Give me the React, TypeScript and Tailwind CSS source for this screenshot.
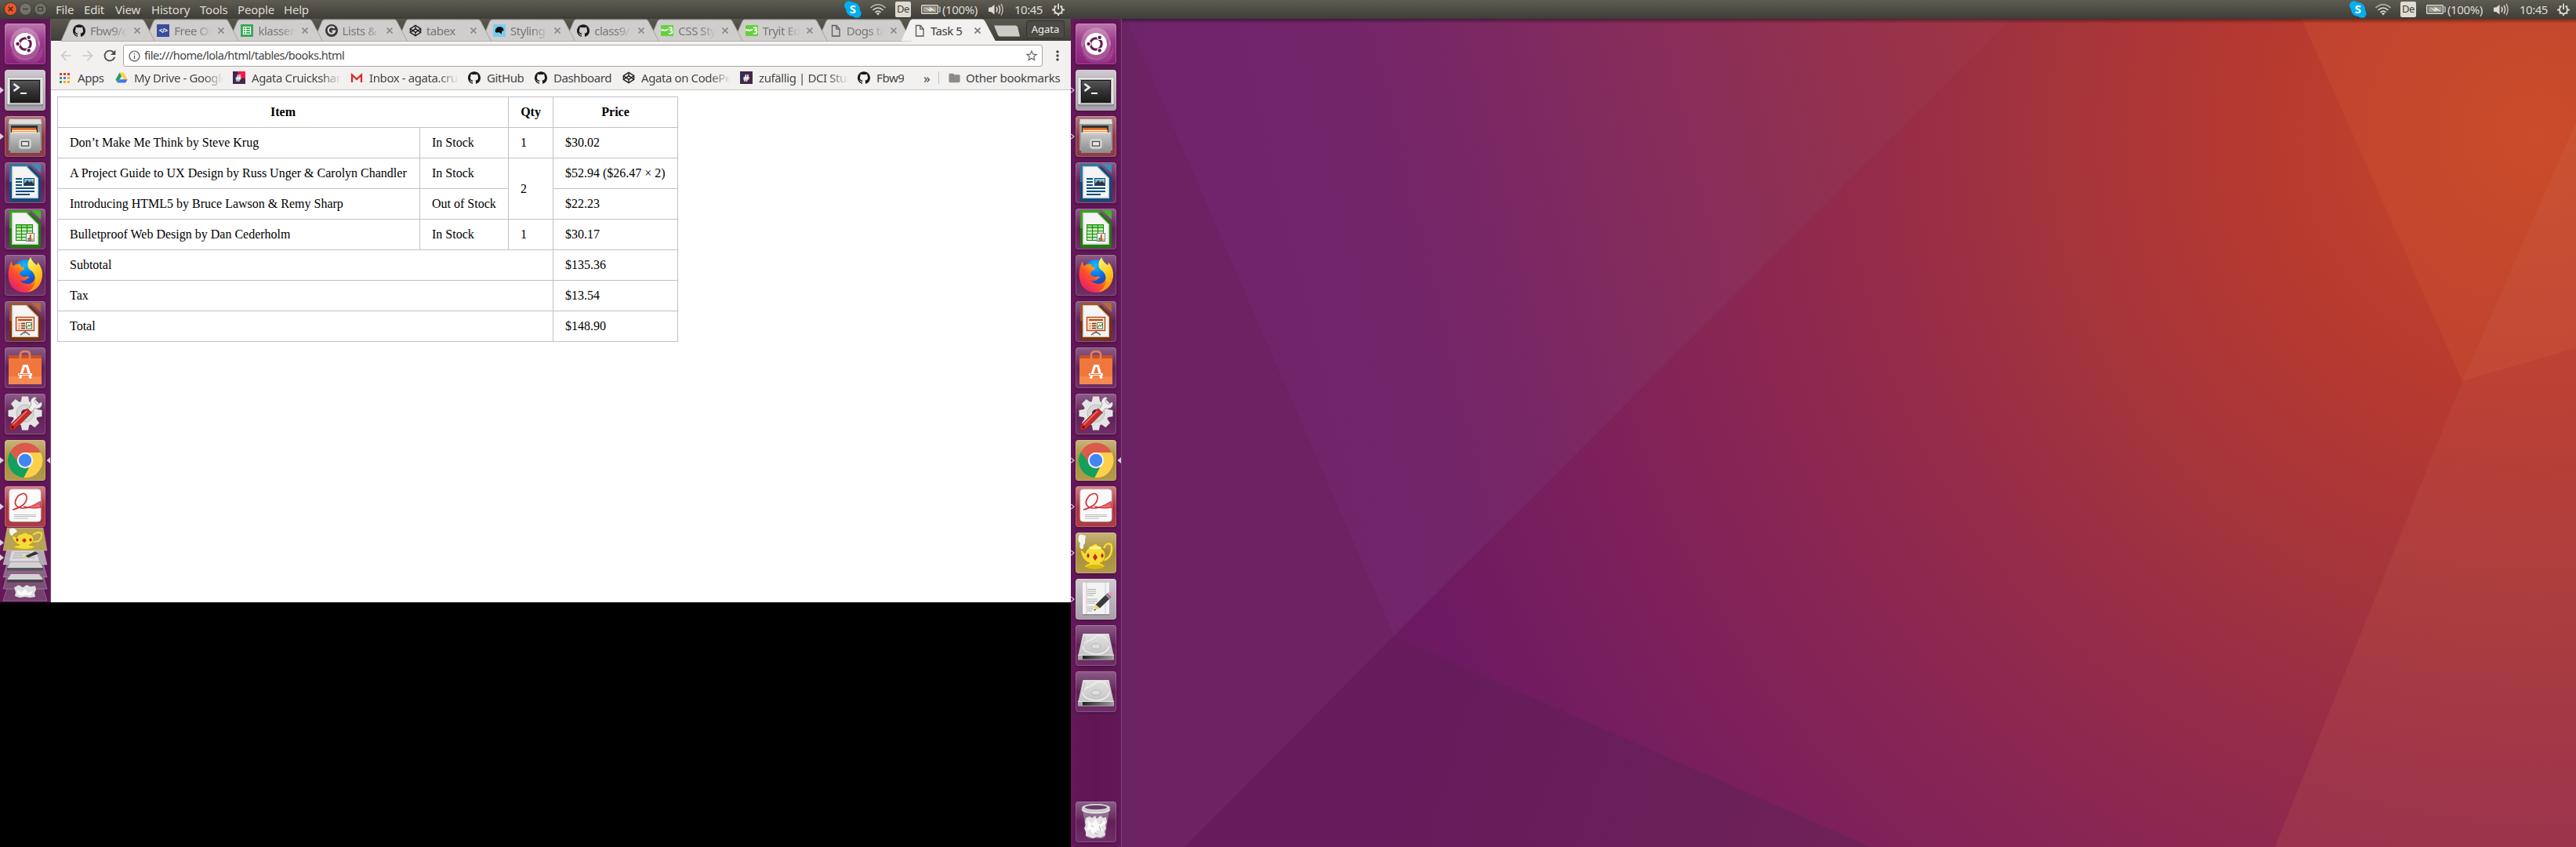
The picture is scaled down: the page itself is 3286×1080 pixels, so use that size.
import React from "react";
import { SiGithub } from "react-icons/si";
import { FiCodepen } from "react-icons/fi";
import {
  MdArrowBack,
  MdArrowForward,
  MdRefresh,
  MdStarBorder,
  MdMoreVert,
  MdInfoOutline,
  MdFolder,
} from "react-icons/md";

/* ---------- top panel ---------- */

function Indicators() {
  return (
    <div className="flex h-6 w-[290px] items-center text-[15px] text-[#dfdbd2]">
      <svg className="h-6 w-[34px]" viewBox="0 0 34 24">
        <circle cx="12" cy="12" r="9" fill="#00aff0" />
        <circle cx="6.8" cy="7" r="5.8" fill="#00aff0" />
        <circle cx="17" cy="17.2" r="5.6" fill="#00aff0" />
        <text x="12" y="17" textAnchor="middle" fontSize="15" fontWeight="700" fill="#fff" fontFamily="Open Sans, sans-serif">S</text>
      </svg>
      <svg className="h-6 w-[32px]" viewBox="0 0 32 24" fill="none" stroke="#dfdbd2" strokeWidth="1.6">
        <path d="M0.5 10Q10 1.500 19.500 10" opacity=".75" />
        <path d="M3.500 13Q10 7 16.500 13" />
        <path d="M6.500 15.800Q10 12.500 13.500 15.800" />
        <path d="M10 19.500L7.800 17Q10 15.300 12.200 17Z" fill="#dfdbd2" stroke="none" />
      </svg>
      <div className="mr-[13px] flex h-5 w-5 items-center justify-center rounded-[2px] bg-[#dfdbd2] text-[13px] tracking-[-0.4px] text-[#3c3b37]">De</div>
      <svg className="h-6 w-[27px]" viewBox="0 0 27 24">
        <rect x=".7" y="6.700" width="20.600" height="10.600" rx="1" fill="none" stroke="#dfdbd2" strokeWidth="1.400" />
        <rect x="2.500" y="8.500" width="17" height="7" fill="#a09d95" />
        <path d="M22.500 9h1.500v6h-1.500" fill="none" stroke="#dfdbd2" strokeWidth="1.200" />
        <path d="M4.500 9.500L11.500 12.200L10.500 8.500L18.500 14.500L12 12.800L12.600 15.300Z" fill="#f0ede6" />
      </svg>
      <span className="w-[59px] text-[15px] tracking-[-0.4px]">(100%)</span>
      <svg className="h-6 w-[33px]" viewBox="0 0 33 24" fill="none" stroke="#dfdbd2" strokeWidth="1.500">
        <path d="M0 9.500h3L7.500 6v12.500L3 15H0z" fill="#dfdbd2" stroke="none" />
        <path d="M10 9q2 3.200 0 6.500M13 7q3.200 5.200 0 10.500" />
        <path d="M16 5q4.200 7.200 0 14.500" opacity=".75" />
      </svg>
      <span className="w-[48px] tracking-[-0.5px]">10:45</span>
      <svg className="h-4 w-4" viewBox="0 0 16 16" fill="none" stroke="#dfdbd2">
        <circle cx="8" cy="8.500" r="5" strokeWidth="1.900" />
        <path d="M3 3.500L4.500 5M13 3.500L11.500 5M0 8.500h3M13 8.500h3M3 13.500l1.500-1.500M13 13.500L11.500 12M8 13.500v2.500" strokeWidth="2" />
        <path d="M8 0v8" stroke="#46453f" strokeWidth="4.500" />
        <path d="M8 .5v7.500" strokeWidth="1.900" />
      </svg>
    </div>
  );
}

const menus = [
  { t: "File", c: "w-9" },
  { t: "Edit", c: "w-10" },
  { t: "View", c: "w-[46px]" },
  { t: "History", c: "w-[62px]" },
  { t: "Tools", c: "w-12" },
  { t: "People", c: "w-[59px]" },
  { t: "Help", c: "w-10" },
];

function Panel({ window: hasWindow }: { window?: boolean }) {
  return (
    <div className="relative z-10 flex h-6 shrink-0 items-center justify-between bg-linear-to-b from-[#5e5c51] to-[#3e3d39]">
      {hasWindow ? (
        <div className="flex h-6 items-center text-[15px] text-[#dfdbd2]">
          <svg className="h-6 w-[71px]" viewBox="0 0 71 24">
            <circle cx="13.500" cy="11.500" r="8" fill="#e9592b" stroke="#3a2a22" strokeWidth=".8" />
            <circle cx="32.500" cy="11.500" r="7.700" fill="#757269" stroke="#37362f" strokeWidth=".8" />
            <circle cx="51.500" cy="11.500" r="7.700" fill="#757269" stroke="#37362f" strokeWidth=".8" />
            <path d="M10.800 8.800l5.400 5.400M16.200 8.800l-5.400 5.400" stroke="#4a2413" strokeWidth="1.500" />
            <path d="M29 11.500h7" stroke="#3a3934" strokeWidth="1.300" />
            <rect x="48.500" y="9.200" width="6" height="4.600" fill="none" stroke="#3a3934" strokeWidth="1.200" />
          </svg>
          {menus.map((m) => (
            <span key={m.t} className={"tracking-[-0.2px] " + m.c}>{m.t}</span>
          ))}
        </div>
      ) : (
        <div />
      )}
      <Indicators />
    </div>
  );
}

/* ---------- launcher icons (52 x 52) ---------- */

function UbuntuIcon() {
  return (
    <g>
      <path d="M8 30A19 19 0 0 1 34 7Q46 14 45 30Q38 14 26 13Z" fill="#fff" opacity=".25" />
      <path d="M44 22A19 19 0 0 1 18 45Q7 38 7 22Q14 38 26 39Z" fill="#fff" opacity=".2" />
      <path d="M26 45Q42 44 48 30Q50 44 40 50H20Q10 46 8 34Q16 44 26 45Z" fill="#fff" opacity=".1" />
      <circle cx="26" cy="26" r="14" fill="#fff" />
      <circle cx="26" cy="26" r="7.200" fill="none" stroke="#5e1a52" strokeWidth="3" />
      <g stroke="#fff" strokeWidth="1.200" fill="#5e1a52">
        <circle cx="16.600" cy="26" r="2.800" />
        <circle cx="30.700" cy="17.700" r="2.800" />
        <circle cx="30.700" cy="34.300" r="2.800" />
      </g>
    </g>
  );
}

function TerminalIcon() {
  return (
    <g>
      <defs>
        <linearGradient id="term" x1="0" y1="0" x2="0" y2="1">
          <stop offset="0" stopColor="#555" />
          <stop offset=".5" stopColor="#333" />
          <stop offset="1" stopColor="#1c1c1c" />
        </linearGradient>
      </defs>
      <rect x="3" y="9.500" width="46" height="37" rx="1.500" fill="#888" />
      <rect x="3.500" y="10" width="45" height="34" rx="1" fill="#f4f4f4" />
      <rect x="5.500" y="11.500" width="41" height="33" fill="#bbb" />
      <rect x="7" y="13" width="38" height="29" fill="#111" />
      <rect x="8" y="14" width="36" height="27" fill="url(#term)" />
      <path d="M11.500 18l6 4.500l-6 4.500" fill="none" stroke="#eee" strokeWidth="2.600" />
      <path d="M20 30h8" stroke="#fff" strokeWidth="2" />
    </g>
  );
}

function FilesIcon() {
  return (
    <g>
      <defs>
        <linearGradient id="cab" x1="0" y1="0" x2="0" y2="1">
          <stop offset="0" stopColor="#cacaca" />
          <stop offset="1" stopColor="#8b8b8b" />
        </linearGradient>
      </defs>
      <path d="M6 4h40l1 6v34H5V10z" fill="#9a9a9a" />
      <path d="M6 4h40l1 6H5z" fill="#dedede" />
      <rect x="8" y="12" width="34" height="10" fill="#333" />
      <rect x="9" y="15" width="31" height="8" fill="#d9672d" />
      <path d="M9 17.500h32V24H9z" fill="#f5a55c" />
      <path d="M10 18.500h30M10 21h30" stroke="#fff2df" strokeWidth="1" />
      <path d="M7 21h38v26H7z" fill="url(#cab)" />
      <path d="M7 21.500h38" stroke="#e8e8e8" />
      <rect x="19" y="30" width="14" height="11" rx="2" fill="#c8c8c8" stroke="#eee" />
      <rect x="21.500" y="32.500" width="9" height="5.500" fill="#e8e8e8" stroke="#555" strokeWidth="1.300" />
    </g>
  );
}

function OfficeDoc({ dark, light, children }: { dark: string; light: string; children: React.ReactNode }) {
  return (
    <g>
      <path d="M8 2H30L46 19V47a3 3 0 0 1-3 3H9a3 3 0 0 1-3-3V4a2 2 0 0 1 2-2z" fill={dark} />
      <path d="M34 2h10a2 2 0 0 1 2 2v10z" fill={light} />
      <path d="M8 2H30L33 5.500H9V25H6V4a2 2 0 0 1 2-2z" fill={light} opacity=".65" />
      <path d="M9 5H28L43 20V46H9z" fill="#ccc" />
      <path d="M10.500 6H27L41.500 20.500V44.500H10.500z" fill="#f5f5f5" />
      {children}
    </g>
  );
}

function WriterIcon() {
  return (
    <OfficeDoc dark="#0b4d7c" light="#3c8dbc">
      <path d="M14 21h8M14 25h8M14 29h8M14 33h24M14 37h24M14 41h18" stroke="#0b4d7c" strokeWidth="1.800" />
      <rect x="24" y="20" width="14" height="10" fill="#0b4d7c" />
      <rect x="25" y="21" width="12" height="8" fill="#78bce6" />
      <path d="M25 29V27l4-4 2.500 2.500L34 24l3 3v2z" fill="#333" />
      <circle cx="36" cy="22" r="1.300" fill="#f5c542" />
    </OfficeDoc>
  );
}

function CalcIcon() {
  return (
    <OfficeDoc dark="#1a7f0b" light="#46b52e">
      <rect x="14.500" y="20.500" width="21" height="20" fill="#c9f2bd" stroke="#1a8a0b" />
      <rect x="15" y="21" width="20" height="3.500" fill="#7bd16c" />
      <path d="M21.500 20v20M28.500 20v20M14 24.500h21M14 28.500h21M14 32.500h21M14 36.500h21" stroke="#1a8a0b" strokeWidth="1.100" />
      <rect x="27.500" y="31.500" width="10" height="10" fill="#fff" stroke="#777" />
      <path d="M30.500 41v-4" stroke="#2a9be0" strokeWidth="2.600" />
      <path d="M32.800 41v-8" stroke="#d9602a" strokeWidth="2.400" />
      <path d="M35.300 41v-3" stroke="#f0b020" strokeWidth="2.400" />
    </OfficeDoc>
  );
}

function ImpressIcon() {
  return (
    <OfficeDoc dark="#793207" light="#b46a35">
      <path d="M26 37v3M26 39l-6 4M26 39l6 4" stroke="#777" strokeWidth="1.800" fill="none" />
      <rect x="14.500" y="20.500" width="23" height="17" fill="#fbe3d3" stroke="#b8470f" strokeWidth="1.400" />
      <path d="M17 24h18" stroke="#b8470f" strokeWidth="2" />
      <path d="M17.500 28.500h2M17.500 31.500h2M17.500 34.500h2" stroke="#e07b45" strokeWidth="1.700" />
      <path d="M21 28.500h5M21 31.500h5M21 34.500h5" stroke="#7a2d08" strokeWidth="1.700" />
      <rect x="27.500" y="27.500" width="7" height="7.500" fill="#fff" stroke="#666" />
      <path d="M28.500 33.500l2-3 1.500 1.500 2-3" stroke="#22a822" fill="none" strokeWidth="1.200" />
    </OfficeDoc>
  );
}

function FirefoxIcon() {
  return (
    <g>
      <defs>
        <linearGradient id="ffo" x1="1" y1="0" x2=".1" y2="1">
          <stop offset="0" stopColor="#fff44f" />
          <stop offset=".35" stopColor="#ffb000" />
          <stop offset=".6" stopColor="#ff4f2e" />
          <stop offset="1" stopColor="#e0127a" />
        </linearGradient>
        <linearGradient id="ffy" x1=".3" y1="0" x2=".6" y2="1">
          <stop offset="0" stopColor="#fff66a" />
          <stop offset=".55" stopColor="#ffc51c" />
          <stop offset="1" stopColor="#ff8a16" />
        </linearGradient>
        <radialGradient id="ffb" cx=".45" cy=".2" r=".9">
          <stop offset="0" stopColor="#18b9ff" />
          <stop offset=".5" stopColor="#0a66e0" />
          <stop offset="1" stopColor="#3a1f8c" />
        </radialGradient>
      </defs>
      <circle cx="27" cy="24" r="18" fill="url(#ffb)" />
      <path d="M9 8Q9 13 11 14Q15 11 20 12Q20 16 25 16Q25 19 21 20.500Q18 23 20 26Q23 29 28 27.500Q32 27 31.500 29Q28 30 27 32Q22 34 19 32Q25 39 34 36Q39 33 39 26L47 20Q50 46 26 48Q5 47 4.500 25Q5 14 9 8Z" fill="url(#ffo)" />
      <path d="M33 3Q35 9 41 13Q43 11 41 8Q49 17 48 28Q45 44 29 47.500Q40 42 39 30Q38 22 32 19Q26 13 33 3Z" fill="url(#ffy)" />
    </g>
  );
}

function SoftwareIcon() {
  return (
    <g>
      <path d="M5 10h42v6H5z" fill="#c9531f" />
      <path d="M5 14h42v33H5z" fill="#f0763c" />
      <path d="M5 37h42v10H5z" fill="#f6894f" />
      <path d="M20 17V9q0-4 6-4t6 4v8" fill="none" stroke="#e4825c" strokeWidth="2.600" />
      <path d="M19.500 39.500L24.500 23.500h4L33 39.500M17 34.500h18" fill="none" stroke="#fff" strokeWidth="3.200" />
      <path d="M18 34.500h14" stroke="#f0763c" strokeWidth="1.200" />
    </g>
  );
}

function SettingsIcon() {
  const teeth = [0, 45, 90, 135, 180, 225, 270, 315];
  return (
    <g>
      <g fill="#e4e4e4">
        {teeth.map((a) => (
          <path key={a} d="M20.500 12L22 3.500h8L31.500 12z" transform={`rotate(${a} 26 25)`} />
        ))}
        <circle cx="26" cy="25" r="16" />
      </g>
      <circle cx="26" cy="25" r="11" fill="#d6d6d6" stroke="#bbb" />
      <circle cx="26" cy="25" r="5" fill="#5b2354" />
      <path d="M30 20L34 14Q31 7 38 4L40.500 5.500L37.500 9.500L41.500 14L46.500 10.500Q49 14 45 18Q41 20 38 18.500L34 24z" fill="#eee" stroke="#888" strokeWidth=".7" />
      <path d="M28.500 19L34.500 24L13 45.500Q8 48 6 44.500Q5 41.500 8.500 38.500Z" fill="#c92a2a" stroke="#7d1111" strokeWidth=".7" />
      <path d="M28 22L10.500 39.500" stroke="#e98080" strokeWidth="1.500" />
      <circle cx="10" cy="42.800" r="1.800" fill="#6b1010" />
    </g>
  );
}

function ChromeIcon() {
  return (
    <g>
      <circle cx="26" cy="26" r="22" fill="#fdd04b" />
      <path d="M6.900 15A22 22 0 0 0 24.500 48L33.500 30L26 26L19 30z" fill="#14a05c" />
      <path d="M26 16H46A22 22 0 0 1 24.500 48L34 31z" fill="#fdd04b" />
      <path d="M6.900 15A22 22 0 0 1 46 16H26A10 10 0 0 0 17 29z" fill="#db5a4a" />
      <circle cx="26" cy="26" r="10.200" fill="#f3f3f3" />
      <circle cx="26" cy="26" r="8.200" fill="#4285f4" />
    </g>
  );
}

function PdfIcon() {
  return (
    <g>
      <rect x="6" y="5" width="41" height="41.500" rx="4" fill="#6f4040" opacity=".7" />
      <rect x="6" y="4" width="40" height="41" rx="3.500" fill="#fafafa" stroke="#ddd" />
      <path d="M10 30Q29 25 28 13Q26 6 17.500 12Q10 21 16 26Q25 32 45 20L45.500 27Q36 29 24 26" fill="none" stroke="#d22f35" strokeWidth="1.600" />
      <path d="M30 26Q38 25 45 20v6Q38 29 30 26z" fill="#e4676b" />
      <path d="M12 36.500h28M12 38.500h28M12 41h18" stroke="#bbb" strokeWidth="1" />
    </g>
  );
}

function TeapotIcon() {
  return (
    <g>
      <path d="M4 6Q4 1 9 3Q15 3 12 9Q13 14 10 16Q11 22 7 21Q4 19 6 14Q2 10 4 6z" fill="#f4f4f4" />
      <path d="M36 20Q39 12 45 15Q48 20 44 29Q41 35 34 35" fill="none" stroke="#c9a917" strokeWidth="3.600" />
      <path d="M36 20Q39 12 45 15Q48 20 44 29Q41 35 34 35" fill="none" stroke="#f7e44c" strokeWidth="2" />
      <path d="M6 22Q9 22 12 27Q14 20 19 19Q22 14 26 14Q29 16 30 19Q38 21 38 30Q37 37 31 39Q38 41 37 44Q25 50 12 44Q10 42 18 39Q8 36 6 22z" fill="#f3de35" stroke="#b4930c" strokeWidth=".9" />
      <ellipse cx="25" cy="19.500" rx="8" ry="2.300" fill="#fff27c" />
      <ellipse cx="25" cy="43.500" rx="11" ry="2.500" fill="#d9b914" />
      <g fill="#c62828">
        <path d="M16 26l2 3.500-2 3.500-2-3.500zM25 27l3 4.500-3 4.500-3-4.500zM34 26l2 3.500-2 3.500-2-3.500z" />
      </g>
    </g>
  );
}

function EditorIcon() {
  return (
    <g>
      <path d="M9 6h34v41H9z" fill="#8a858c" opacity=".6" />
      <path d="M9 5h34v40H9z" fill="#f3f3f3" />
      <path d="M14 5v40" stroke="#eba7ad" strokeWidth=".8" />
      <path d="M38 5v40" stroke="#b9c8dd" strokeWidth=".8" />
      <path d="M15 13.500h11M15 16h11M15 18.500h11M15 21h8M15 26h13M15 28.500h13M15 31h10M15 36h9M15 38.500h8M15 41h6" stroke="#9d9d9d" strokeWidth=".8" />
      <path d="M40.500 18.500L45.500 23.500L31 37.500L25.500 33z" fill="#3b3b3b" />
      <path d="M39 20l5 5" stroke="#999" strokeWidth="2.500" />
      <path d="M40.800 18.700Q44 15 47.500 18.500Q48 21.500 45.500 23.500z" fill="#e79ac5" />
      <path d="M25.500 33L31 37.500L23.500 40.500z" fill="#ecd96a" />
      <path d="M23 41l1.800-2.600 1.200 1.100z" fill="#222" />
    </g>
  );
}

function DriveIcon() {
  return (
    <g>
      <defs>
        <linearGradient id="hdd" x1="0" y1="0" x2="0" y2="1">
          <stop offset="0" stopColor="#e3e3e3" />
          <stop offset="1" stopColor="#c4c4c4" />
        </linearGradient>
        <linearGradient id="hdb" x1="0" x2="1" y1="0" y2="0">
          <stop offset="0" stopColor="#222" />
          <stop offset="1" stopColor="#999" />
        </linearGradient>
      </defs>
      <path d="M9.500 11h33L48.500 38H3.500z" fill="url(#hdd)" />
      <path d="M3 38h46v6.500H3z" fill="#a6a6a6" />
      <path d="M9 39h38v4.500H9z" fill="url(#hdb)" />
      <path d="M3 38.300h46" stroke="#efefef" />
      <path d="M28 13Q43 13 43 27Q40 37 26 37Q12 36 9.500 29Q10 21 17 20Q22 18 28 13z" fill="none" stroke="#f4f4f4" strokeWidth="1.200" />
      <path d="M12 14Q10 22 10 27M40 14Q43 19 43 27" fill="none" stroke="#adadad" strokeWidth=".6" />
      <ellipse cx="26" cy="27" rx="6" ry="3.400" fill="#dedede" stroke="#aaa" strokeWidth=".8" />
    </g>
  );
}

function TrashIcon() {
  return (
    <g>
      <path d="M9 10h34L38 44Q37 47 32 47H20Q15 47 14 44z" fill="#fff" opacity=".28" />
      <path d="M13 21l5-2 3 2 4-3 2 4 5-4 3 3 4-1 1 6-2 4 1 4-2 4 1 5-6 3-5-1-5 2-5-2-4-1 0-5-2-5 2-4-1-4z" fill="#e3e3e3" />
      <path d="M15 23l6 5 5-6 3 7 6-5 4 3-7 6 4 5-8-2-6 6-3-7-5 3 2-7z" fill="#fbfbfb" />
      <path d="M20 30l3 3M30 31l2 6M24 40l4 2M34 25l-3 4" stroke="#aaa" />
      <ellipse cx="26" cy="8" rx="18" ry="5" fill="#d8d8d8" />
      <ellipse cx="26" cy="7.500" rx="14" ry="2.800" fill="#6d3a67" />
      <path d="M8 8.500v3Q12 15.500 26 15.500T44 11.500v-3Q40 13 26 13T8 8.500z" fill="#eee" stroke="#999" strokeWidth=".5" />
    </g>
  );
}

type App = { name: string; bg: string; icon: () => React.ReactElement; open?: boolean; focus?: boolean };

const plain = "bg-linear-to-b from-[#8c5d88] via-[#622058] via-50% to-[#6f2f68]";

const apps: App[] = [
  { name: "dash", bg: "bg-linear-to-b from-[#bd78af] via-[#9d3c8c] via-40% to-[#8b1f79]", icon: UbuntuIcon },
  { name: "terminal", bg: "bg-linear-to-b from-[#cfc9d0] to-[#a79fa9]", icon: TerminalIcon, open: true },
  { name: "files", bg: "bg-linear-to-b from-[#b57b7f] via-[#8d3c48] via-50% to-[#8d3c46]", icon: FilesIcon, open: true },
  { name: "writer", bg: plain, icon: WriterIcon },
  { name: "calc", bg: plain, icon: CalcIcon },
  { name: "firefox", bg: plain, icon: FirefoxIcon },
  { name: "impress", bg: plain, icon: ImpressIcon },
  { name: "software", bg: plain, icon: SoftwareIcon },
  { name: "settings", bg: plain, icon: SettingsIcon },
  { name: "chrome", bg: "bg-linear-to-b from-[#c9b578] via-[#a88e3f] via-50% to-[#b39a4b]", icon: ChromeIcon, open: true, focus: true },
  { name: "pdf", bg: "bg-linear-to-b from-[#d08086] via-[#ae3540] via-50% to-[#b03a44]", icon: PdfIcon, open: true },
];

const moreApps: App[] = [
  { name: "teapot", bg: "bg-linear-to-b from-[#c9b578] via-[#a88e3f] via-50% to-[#b39a4b]", icon: TeapotIcon, open: true },
  { name: "editor", bg: "bg-linear-to-b from-[#cfc9d0] to-[#a79fa9]", icon: EditorIcon, open: true },
  { name: "drive-a", bg: plain, icon: DriveIcon },
  { name: "drive-b", bg: plain, icon: DriveIcon },
];

function Tile({ app, outline }: { app: App; outline?: boolean }) {
  const Icon = app.icon;
  return (
    <div className="flex h-[52px] w-16 shrink-0 items-center">
      <svg className="h-[10px] w-[6px]" viewBox="0 0 6 10">
        {app.open &&
          (outline ? (
            <path d="M.3 2L4 5L.3 8" fill="none" stroke="#cfc6ce" strokeWidth="1.300" />
          ) : (
            <path d="M0 1L5 5L0 9z" fill="#d8d3d8" />
          ))}
      </svg>
      <div className={"h-[52px] w-[52px] rounded-[4px] shadow-[inset_0_0_0_1px_rgba(255,255,255,0.18),0_1px_3px_rgba(0,0,0,0.35)] " + app.bg}>
        <svg className="h-[52px] w-[52px]" viewBox="0 0 52 52">
          <Icon />
        </svg>
      </div>
      <svg className="h-[10px] w-[6px]" viewBox="0 0 6 10">
        {app.focus && <path d="M6 1L1.500 5L6 9z" fill="#d8d3d8" />}
      </svg>
    </div>
  );
}

function FoldedTiles() {
  return (
    <svg className="mt-[-7px] h-[96px] w-16 shrink-0" viewBox="0 0 64 96">
      <g stroke="#fff" strokeOpacity=".25">
        <path d="M10 75h44l6 19H4z" fill="#74406d" />
        <path d="M9 60h46l5 19H4z" fill="#7d5078" />
        <path d="M9 46h46l5 18H4z" fill="#8c6488" />
        <path d="M9 27h46l5 21H4z" fill="#b2a8b3" />
        <path d="M9 1h46l5 29H4z" fill="#b8a256" />
      </g>
      <path d="M15 30.500h31l4 13H12z" fill="#eee" opacity=".7" />
      <path d="M18 33h20M17 36h12M16 39h28" stroke="#999" strokeWidth=".8" />
      <path d="M45 31l4 3-13 5-4-2z" fill="#333" />
      <path d="M32 37l4 2-6 1z" fill="#e8d25a" />
      <path d="M14 45h36l5 7H9z" fill="#d2d2d2" />
      <path d="M9 52h46v3.500H9z" fill="#555" />
      <path d="M14 60h36l5 7H9z" fill="#d2d2d2" />
      <path d="M9 67h46v3.500H9z" fill="#444" />
      <path d="M18 77l6-3 5 3 5-3 5 2 6-1 1 5-2 4 1 5-7 1-6-1-7 1-6-2 1-5z" fill="#dedede" />
      <path d="M22 79l5 4 5-4 4 5 6-3-3 6-6-1-6 2-5-3z" fill="#fafafa" />
      <path d="M12 3q4-3 8 0t-2 5l-3 4q-4-5-3-9z" fill="#f4f4f4" />
      <path d="M42 10q6-5 11-2q1 6-4 10l-8 1" fill="none" stroke="#f0db3a" strokeWidth="2" />
      <path d="M15 11q4 0 6 3 2-5 7-5 4-4 8 0 6 0 7 6 0 6-6 8 8 1 8 3-13 5-28 0 0-2 8-3-8-3-10-12z" fill="#f3de35" stroke="#b4930c" strokeWidth=".7" />
      <path d="M22 14l2 2-2 3-2-3zM31 14l3 3-3 3-3-3zM39 14l2 2-2 3-2-3z" fill="#c62828" />
      <path d="M0 16l5 4-5 4zM0 35l5 4-5 4z" fill="#d8d3d8" />
    </svg>
  );
}

function Launcher({ full }: { full?: boolean }) {
  return (
    <div className="flex w-[65px] shrink-0 flex-col gap-[7px] border-r border-[#7d4277] bg-linear-to-r from-[#65175a] via-[#5e1653] to-[#621859] pt-[6px] pb-[6px]">
      {apps.map((a) => (
        <Tile key={a.name} app={a} outline={full} />
      ))}
      {full ? (
        <>
          {moreApps.map((a) => (
            <Tile key={a.name} app={a} outline />
          ))}
          <div className="grow" />
          <Tile app={{ name: "trash", bg: plain, icon: TrashIcon }} />
        </>
      ) : (
        <FoldedTiles />
      )}
    </div>
  );
}

/* ---------- browser ---------- */

function Square({ bg, label, size = "text-[11px]" }: { bg: string; label: string; size?: string }) {
  return (
    <span className={"flex h-4 w-4 shrink-0 items-center justify-center leading-none font-bold text-white " + bg + " " + size}>
      {label}
    </span>
  );
}

const Github = () => <SiGithub className="h-4 w-4 shrink-0 text-[#1b1817]" />;
const Codepen = () => <FiCodepen className="h-4 w-4 shrink-0 text-[#222]" />;
const Doc = () => (
  <svg className="h-4 w-4 shrink-0" viewBox="0 0 16 16" fill="none" stroke="#5a5a5a" strokeWidth="1.300">
    <path d="M3.500 1.500h5.500l4 4.500v9h-9.500zM8.800 1.500v4.700h4" />
  </svg>
);
const Sheet = () => (
  <svg className="h-4 w-4 shrink-0" viewBox="0 0 16 16">
    <path d="M0 0h16v16H0z" fill="#3aa757" />
    <path d="M3.500 3.500h9v9h-9zM3.500 6.500h9M3.500 9.500h9M6.500 3.500v9" fill="none" stroke="#fff" strokeWidth="1.200" />
  </svg>
);
const Grammar = () => (
  <svg className="h-4 w-4 shrink-0" viewBox="0 0 16 16">
    <circle cx="8" cy="8" r="8" fill="#3a3a3a" />
    <path d="M11.500 5A4.300 4.300 0 1 0 12.200 8.500H8.500" fill="none" stroke="#e8e8e8" strokeWidth="2" />
  </svg>
);
const Dog = () => (
  <svg className="h-4 w-4 shrink-0" viewBox="0 0 16 16">
    <path d="M0 0h16v16H0z" fill="#79cdf5" />
    <path d="M3 7Q4 3 9 3Q14 4 13.500 8L11 9V12.500L7 10Q4 12 2.500 9z" fill="#111" />
  </svg>
);
const W3 = () => (
  <svg className="h-4 w-4 shrink-0" viewBox="0 0 16 16">
    <rect width="16" height="14" y="1" rx="1" fill="#64d13e" />
    <path d="M1 6q0 3 2.500 1 1 2.500 3 0 1.500 1 2.500-1" fill="none" stroke="#fff" strokeWidth="1.600" />
    <path d="M10 4.500q4-1.500 4 1 0 2-3 2 4 0 3.500 2.500-.5 2.500-4.500 1.500" fill="none" stroke="#fff" strokeWidth="1.600" />
  </svg>
);
const GDrive = () => (
  <svg className="h-4 w-4 shrink-0" viewBox="0 0 16 16">
    <path d="M5.500 1.500L0.500 10.500L3 14.500L8.200 6z" fill="#1da462" />
    <path d="M5.500 1.500H10.500L15.600 10.300H10.500z" fill="#ffcf48" />
    <path d="M5.600 10.300h10L13.200 14.500H3z" fill="#4b6ff5" />
  </svg>
);
const AppsGrid = () => (
  <span className="grid h-[13px] w-[13px] shrink-0 grid-cols-3 gap-[2px]">
    {["bg-[#ee3a23]", "bg-[#ee3a23]", "bg-[#ee3a23]", "bg-[#2fa457]", "bg-[#3d7bf0]", "bg-[#f8a81b]", "bg-[#2fa457]", "bg-[#f8a81b]", "bg-[#f8a81b]"].map((c, i) => (
      <span key={i} className={"h-[3px] w-[3px] " + c} />
    ))}
  </span>
);
const Gmail = () => (
  <svg className="h-4 w-4 shrink-0" viewBox="0 0 16 16">
    <path d="M1 3h14v11H1z" fill="#eee" />
    <path d="M2 14V4.500L8 10l6-5.500V14" fill="none" stroke="#d5281f" strokeWidth="2.200" />
  </svg>
);
const HashPink = () => (
  <svg className="h-4 w-4 shrink-0" viewBox="0 0 16 16">
    <path d="M0 0h16v16H0z" fill="#43284a" />
    <path d="M6 0h10v9Q7 9 6 0z" fill="#ff1450" />
    <text x="7.200" y="12.500" textAnchor="middle" fontSize="12" fontWeight="700" fill="#fff" fontFamily="Open Sans, sans-serif">#</text>
  </svg>
);

const tabs = [
  { t: "Fbw9/c", icon: <Github /> },
  { t: "Free Onl", icon: <Square bg="bg-[#3d4b9b]" label="</>" size="text-[8px] tracking-[-0.6px]" /> },
  { t: "klassen", icon: <Sheet /> },
  { t: "Lists & T", icon: <Grammar /> },
  { t: "tabex", icon: <Codepen /> },
  { t: "Styling", icon: <Dog /> },
  { t: "class9/", icon: <Github /> },
  { t: "CSS Sty", icon: <W3 /> },
  { t: "Tryit Ed", icon: <W3 /> },
  { t: "Dogs ta", icon: <Doc /> },
  { t: "Task 5", icon: <Doc /> },
];

const fade = "[mask-image:linear-gradient(to_right,black_60%,transparent)]";

function TabStrip() {
  return (
    <div className="flex h-[28px] bg-linear-to-b from-[#5a584d] to-[#403f3a] pl-[13px]">
      {tabs.map((tab, i) => {
        const active = i === tabs.length - 1;
        return (
          <div key={tab.t} className="relative h-[28px] w-[107.2px] shrink-0" style={{ zIndex: active ? 20 : 15 - i }}>
            <svg className="absolute top-0 left-0 h-[29px] w-[120px]" viewBox="0 0 120 29">
              <path
                d="M0 28.500L11 3Q12 1 14 1H103Q105 1 106 3L119.500 28.500"
                fill={active ? "#f2f1f0" : "#d0cecc"}
                stroke={active ? "#f2f1f0" : "#a5a39f"}
                strokeWidth="1"
              />
              {!active && <path d="M0 28.500H119" stroke="#b3b1ae" />}
            </svg>
            <div className={"relative flex h-[28px] items-center pt-[2px] pl-[15px] text-[15px] " + (active ? "text-[#3c3c3c]" : "text-[#777]")}>
              {tab.icon}
              <span className={"ml-[6px] w-[48px] overflow-hidden whitespace-nowrap tracking-[-0.45px] " + (tab.t === "tabex" || active ? "" : fade)}>{tab.t}</span>
              <svg className="ml-[8px] h-2 w-2" viewBox="0 0 8 8">
                <path d="M.5 .5l7 7M7.500 .5l-7 7" stroke={active ? "#777" : "#8b8987"} strokeWidth="1.600" />
              </svg>
            </div>
          </div>
        );
      })}
      <svg className="h-[28px] w-[52px] shrink-0" viewBox="0 0 52 28">
        <path d="M11 8.500H38Q40 8.500 41 10L44 22.500H19Q17 22.500 16 21z" fill="#cdcbc8" />
      </svg>
      <div className="mt-[2px] flex h-[23px] w-[49px] items-center justify-center rounded-[3px] border border-[#35342f] bg-[#4b4a44] text-[13px] text-[#f2f1f0]">Agata</div>
    </div>
  );
}

const bookmarks = [
  { t: "Apps", c: "w-[71px]", icon: <AppsGrid />, short: true, gap: "ml-[10px]" },
  { t: "My Drive - Google", c: "w-[150px]", icon: <GDrive />, short: false },
  { t: "Agata Cruickshank", c: "w-[150px]", icon: <HashPink />, short: false },
  { t: "Inbox - agata.cruick", c: "w-[150px]", icon: <Gmail />, short: false },
  { t: "GitHub", c: "w-[85px]", icon: <Github />, short: true },
  { t: "Dashboard", c: "w-[112px]", icon: <Github />, short: true },
  { t: "Agata on CodePen", c: "w-[150px]", icon: <Codepen />, short: false },
  { t: "zufällig | DCI Stude", c: "w-[150px]", icon: <Square bg="bg-[#43284a]" label="#" size="text-[13px]" />, short: false },
  { t: "Fbw9", c: "w-[84px]", icon: <Github />, short: true },
];

const bookmarkFade = "[mask-image:linear-gradient(to_right,black_78%,transparent)]";

function Browser() {
  return (
    <div className="flex w-[1301px] flex-col bg-white">
      <TabStrip />
      <div className="flex h-[63px] flex-col border-b border-[#c5c3c0] bg-[#f2f1f0] text-[15px] text-[#444]">
        <div className="flex h-[38px] items-center pl-[9px]">
          <MdArrowBack className="mr-[8px] h-5 w-5 text-[#cbcac9]" />
          <MdArrowForward className="mr-[7px] h-5 w-5 text-[#cbcac9]" />
          <MdRefresh className="mr-[6px] h-[22px] w-[22px] text-[#4c4c4c]" />
          <div className="flex h-[28px] w-[1173px] items-center rounded-[3px] border border-[#a9a7a5] bg-white pr-[4px] pl-[5px]">
            <MdInfoOutline className="h-[17px] w-[17px] text-[#666]" />
            <span className="ml-[4px] grow text-[14.5px] tracking-[-0.5px]">file:///home/lola/html/tables/books.html</span>
            <MdStarBorder className="h-[18px] w-[18px] text-[#666]" />
          </div>
          <MdMoreVert className="ml-[9px] h-5 w-5 text-[#444]" />
        </div>
        <div className="flex h-[18px] items-center pl-[11px]">
          {bookmarks.map((b, i) => (
            <div key={i} className={"flex shrink-0 items-center " + b.c}>
              {b.icon}
              <span className={"h-6 overflow-hidden leading-6 whitespace-nowrap tracking-[-0.4px] " + (b.gap ?? "ml-[8px]") + " " + (b.short ? "" : "w-[114px] " + bookmarkFade)}>{b.t}</span>
            </div>
          ))}
          <span className="w-[19px] text-[17px] leading-none">»</span>
          <span className="mr-[11px] h-4 w-px bg-[#c5c3c0]" />
          <MdFolder className="h-[17px] w-[17px] text-[#8b8b8b]" />
          <span className="ml-[6px] whitespace-nowrap tracking-[-0.25px]">Other bookmarks</span>
        </div>
      </div>
      <div className="p-2 font-['Liberation_Serif',serif] text-[16px] leading-[18px] text-black">
        <BookTable />
      </div>
    </div>
  );
}

const cell = "border border-[#c1c1c8] px-[15px] py-[10px] text-left font-normal";
const head = "border border-[#c1c1c8] px-[15px] py-[10px] text-center font-bold";

function BookTable() {
  return (
    <table className="w-[792px] table-fixed border-collapse whitespace-nowrap">
      <colgroup>
        <col className="w-[462px]" />
        <col className="w-[113px]" />
        <col className="w-[57px]" />
        <col className="w-[159px]" />
      </colgroup>
      <thead>
        <tr>
          <th colSpan={2} className={head}>Item</th>
          <th className={head}>Qty</th>
          <th className={head}>Price</th>
        </tr>
      </thead>
      <tbody>
        <tr>
          <td className={cell}>Don’t Make Me Think by Steve Krug</td>
          <td className={cell}>In Stock</td>
          <td className={cell}>1</td>
          <td className={cell}>$30.02</td>
        </tr>
        <tr>
          <td className={cell}>A Project Guide to UX Design by Russ Unger &amp; Carolyn Chandler</td>
          <td className={cell}>In Stock</td>
          <td rowSpan={2} className={cell}>2</td>
          <td className={cell}>$52.94 ($26.47 × 2)</td>
        </tr>
        <tr>
          <td className={cell}>Introducing HTML5 by Bruce Lawson &amp; Remy Sharp</td>
          <td className={cell}>Out of Stock</td>
          <td className={cell}>$22.23</td>
        </tr>
        <tr>
          <td className={cell}>Bulletproof Web Design by Dan Cederholm</td>
          <td className={cell}>In Stock</td>
          <td className={cell}>1</td>
          <td className={cell}>$30.17</td>
        </tr>
        <tr>
          <td colSpan={3} className={cell}>Subtotal</td>
          <td className={cell}>$135.36</td>
        </tr>
        <tr>
          <td colSpan={3} className={cell}>Tax</td>
          <td className={cell}>$13.54</td>
        </tr>
        <tr>
          <td colSpan={3} className={cell}>Total</td>
          <td className={cell}>$148.90</td>
        </tr>
      </tbody>
    </table>
  );
}

/* ---------- wallpaper ---------- */

function Wallpaper() {
  return (
    <svg className="h-full w-full" viewBox="65 24 1855 1056" preserveAspectRatio="none">
      <defs>
        <radialGradient id="glow" gradientUnits="userSpaceOnUse" cx="1870" cy="170" r="1850">
          <stop offset="0" stopColor="#c94a28" />
          <stop offset=".18" stopColor="#b83a2f" />
          <stop offset=".33" stopColor="#a5353b" />
          <stop offset=".47" stopColor="#932b4a" />
          <stop offset=".63" stopColor="#832357" />
          <stop offset=".83" stopColor="#6d1a63" />
          <stop offset="1" stopColor="#68195f" />
        </radialGradient>
        <linearGradient id="low" gradientUnits="userSpaceOnUse" x1="412" y1="900" x2="1000" y2="1080">
          <stop offset="0" stopColor="#651b5c" />
          <stop offset="1" stopColor="#6f2257" />
        </linearGradient>
        <linearGradient id="upper" gradientUnits="userSpaceOnUse" x1="70" y1="300" x2="1190" y2="26">
          <stop offset="0" stopColor="#6d246c" />
          <stop offset=".3" stopColor="#732569" />
          <stop offset=".65" stopColor="#892e58" />
          <stop offset="1" stopColor="#a03543" />
        </linearGradient>
      </defs>
      <path d="M0 0H1920V1080H0z" fill="url(#glow)" />
      <path d="M70 24H1198L412 811z" fill="url(#upper)" />
      <path d="M0 0L70 24L412 811L145 1080H0z" fill="#6c2363" />
      <path d="M412 811L1020 1080H145z" fill="url(#low)" />
      <path d="M1570 24H1920V155L1775 486z" fill="#cc5030" opacity=".4" />
      <path d="M1920 155V444L1775 486z" fill="#d06040" opacity=".4" />
      <path d="M1920 444V1080H1536L1775 486z" fill="#c86050" opacity=".2" />
    </svg>
  );
}

export default function App() {
  return (
    <div className="flex h-[1080px] w-[3286px] overflow-hidden bg-black font-['Noto_Sans',sans-serif]">
      <div className="flex w-[1366px] shrink-0 flex-col">
        <Panel window />
        <div className="flex h-[744px] overflow-hidden">
          <Launcher />
          <Browser />
        </div>
      </div>
      <div className="flex w-[1920px] shrink-0 flex-col">
        <Panel />
        <div className="flex h-[1056px]">
          <Launcher full />
          <div className="relative w-[1855px]">
            <Wallpaper />
            <div className="absolute inset-x-0 top-0 h-[6px] bg-linear-to-b from-black/40 to-transparent" />
          </div>
        </div>
      </div>
    </div>
  );
}
